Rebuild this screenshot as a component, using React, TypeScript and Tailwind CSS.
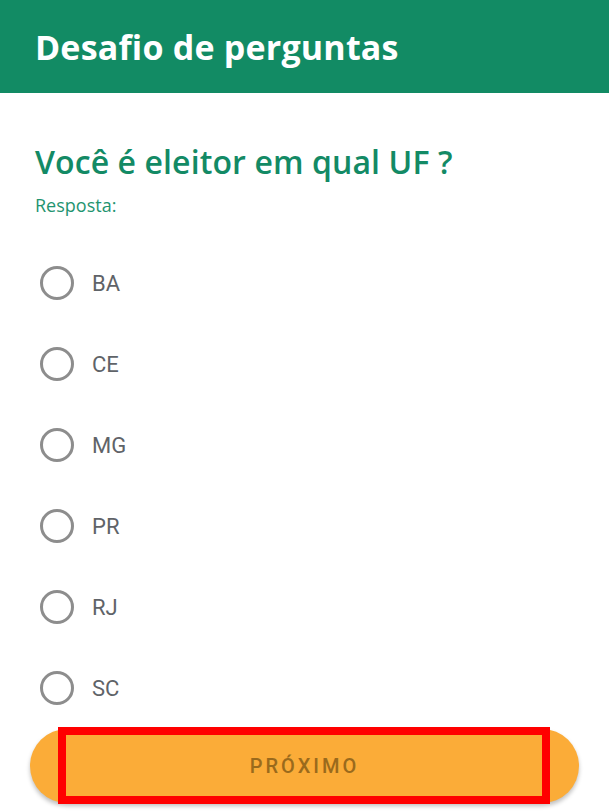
import React from "react";

const options = ["BA", "CE", "MG", "PR", "RJ", "SC"];

export default function App() {
  return (
    <div className="w-[609px] h-[812px] bg-white overflow-hidden relative" style={{ fontFamily: '"Open Sans", sans-serif' }}>
      <div className="h-[93px] bg-[#128b64] flex items-center px-[35px]">
        <h1 className="text-white font-bold text-[34px] leading-none tracking-[0.2px]" style={{ fontFamily: '"Open Sans", sans-serif' }}>
          Desafio de perguntas
        </h1>
      </div>
      <div className="px-[35px] pt-[48px]">
        <h2 className="text-[#138a65] font-semibold text-[32px] leading-[42px] tracking-[0.1px]">Você é eleitor em qual UF ?</h2>
        <p className="text-[#1f9470] text-[18px] leading-[24px] mt-[10px]">Resposta:</p>
      </div>
      <div className="flex flex-col pl-[40px] mt-[49px] gap-[47px]" style={{ fontFamily: 'Roboto, sans-serif' }}>
        {options.map((o) => (
          <div key={o} className="flex items-center h-[34px]">
            <div className="w-[34px] h-[34px] rounded-full border-[3px] border-[#8d8d8d]" />
            <span className="ml-[18px] text-[22px] text-[#5f6368]">{o}</span>
          </div>
        ))}
      </div>
      <div className="absolute left-[30px] top-[729px] w-[549px] h-[74px] rounded-full bg-[#fbac38] shadow-[0_3px_4px_rgba(0,0,0,0.25)] flex items-center justify-center">
        <span className="text-[#9a6a1c] text-[20px] font-medium tracking-[3px]" style={{ fontFamily: 'Roboto, sans-serif' }}>PRÓXIMO</span>
      </div>
      <div className="absolute left-[58px] top-[727px] w-[492px] h-[77px] border-[8px] border-[#ff0000]" />
    </div>
  );
}
